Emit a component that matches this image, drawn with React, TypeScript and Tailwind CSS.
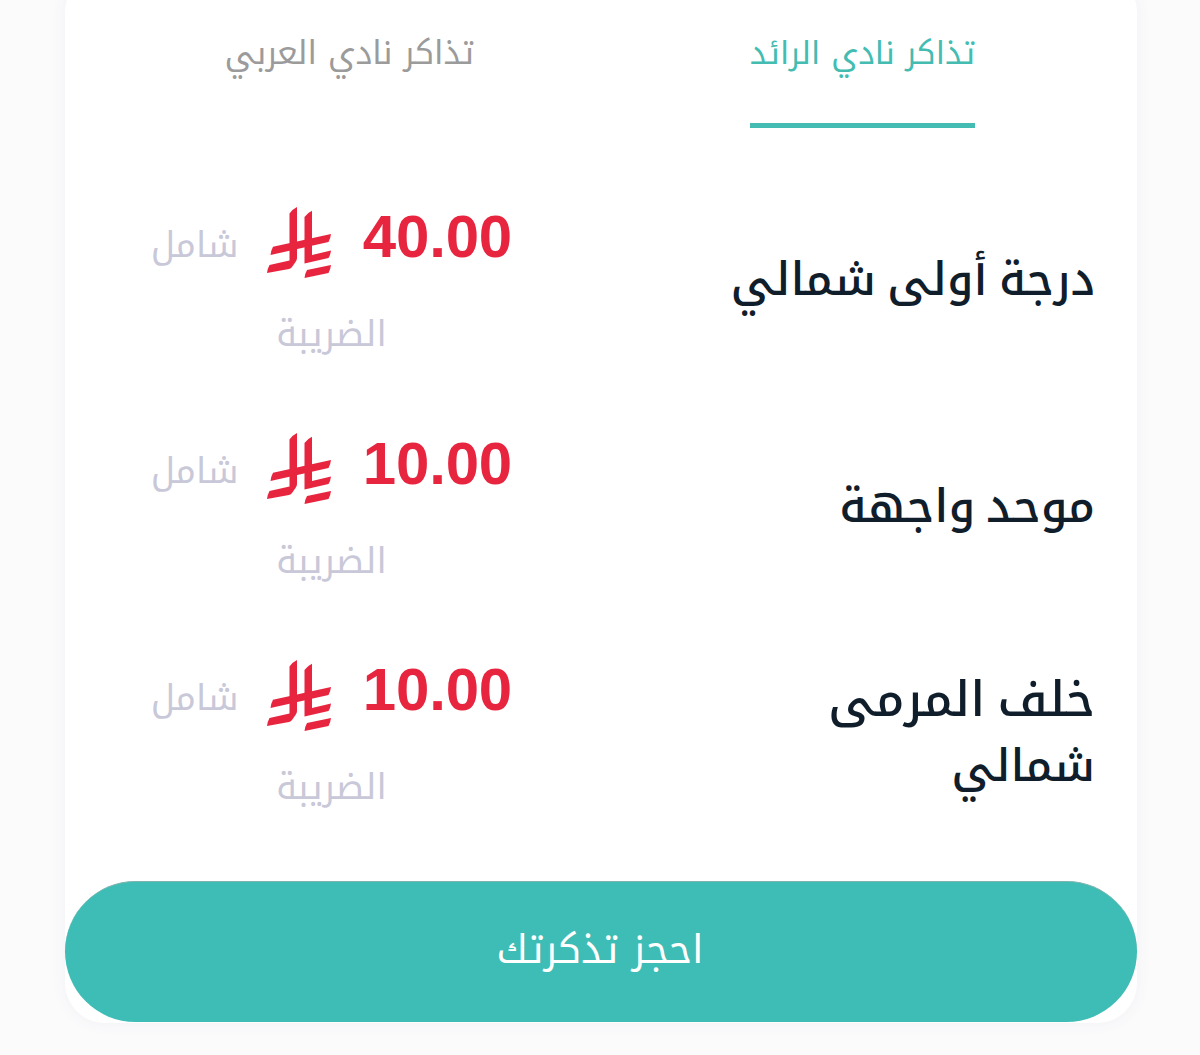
const tickets = [
  { id: 1, lines: [{ text: "درجة أولى شمالي", style: "text-[45.5px] [word-spacing:-4px]" }], price: "40.00" },
  { id: 2, lines: [{ text: "موحد واجهة", style: "text-[46px] [word-spacing:-5px]" }], price: "10.00" },
  {
    id: 3,
    lines: [
      { text: "خلف المرمى", style: "text-[48.5px] [word-spacing:-4px]" },
      { text: "شمالي", style: "text-[45px]" },
    ],
    price: "10.00",
  },
];

type Line = { text: string; style: string };

function Riyal() {
  return (
    <svg viewBox="0 0 64 72" className="h-[72px] w-16 shrink-0 fill-[#e8253f]" aria-hidden="true">
      <path d="M22.5 6.5 Q25 2.500 30 0 V51 Q30 53 28.500 55 L25 60 Q24 61.500 22 62 L0 66 Q0.300 62 2.500 58 L22.500 53.500 Z" />
      <path d="M37.500 10 Q40 6 45 3.700 V48 L64 43.500 Q63.500 48 61.500 51 L37.500 56.500 Z" />
      <path d="M3.500 48 Q4 43.500 6 39.800 L64 27 Q63.500 31.500 61.500 35 Z" />
      <path d="M37.500 71 Q38 66.500 40 63 L64 58 Q63.500 62.500 61.500 66 Z" />
    </svg>
  );
}

function TicketRow({ lines, price }: { lines: Line[]; price: string }) {
  return (
    <li className="flex h-[226.5px] items-start justify-between pr-[42px] pl-[86px]">
      <div className="flex h-[164px] flex-col justify-center leading-[66px] font-medium text-[#101d2b]">
        {lines.map((line) => (
          <span key={line.text} className={`whitespace-nowrap ${line.style}`}>
            {line.text}
          </span>
        ))}
      </div>
      <div className="flex w-[361px] flex-col items-center text-[35.5px] leading-[89px] text-[#c8c8d8]">
        <div className="flex h-[89px] w-full items-center justify-between">
          <span className="-mt-3 font-['Liberation_Sans',Arial,sans-serif] text-[60px] font-bold tracking-[-0.2px] text-[#e8253f]">
            {price}
          </span>
          <div className="flex items-center gap-[29px]">
            <Riyal />
            <span className="pt-[5px]">شامل</span>
          </div>
        </div>
        <span className="pt-[3px]">الضريبة</span>
      </div>
    </li>
  );
}

export default function App() {
  return (
    <main
      dir="rtl"
      className="h-[1055px] overflow-hidden bg-[#fbfbfc] pr-[63px] pl-[65px] font-['Noto_Kufi_Arabic','DejaVu_Sans',sans-serif]"
    >
      <section className="-mt-7 flex h-[1051px] flex-col rounded-[40px] bg-white pt-7 shadow-[0_0_16px_rgba(80,80,140,0.06)]">
        <nav className="flex h-[128px] justify-around pr-6 pl-[22px] leading-[60px]">
          <button className="flex h-[128px] items-start border-b-[5px] border-[#44bcb2] pt-6 text-[32.2px] text-[#44bcb2]">
            تذاكر نادي الرائد
          </button>
          <button className="flex h-[128px] items-start pt-[23px] text-[32.7px] text-[#9b9b9b]">
            تذاكر نادي العربي
          </button>
        </nav>
        <ul className="mt-[70px] h-[683px]">
          {tickets.map((ticket) => (
            <TicketRow key={ticket.id} lines={ticket.lines} price={ticket.price} />
          ))}
        </ul>
        <button className="flex h-[141px] items-center justify-center rounded-full border-t border-[#7fb3ae] bg-[#3dbdb5] pr-[2px] pb-[5px] text-[39.7px] leading-[60px] text-white">
          احجز تذكرتك
        </button>
      </section>
    </main>
  );
}
